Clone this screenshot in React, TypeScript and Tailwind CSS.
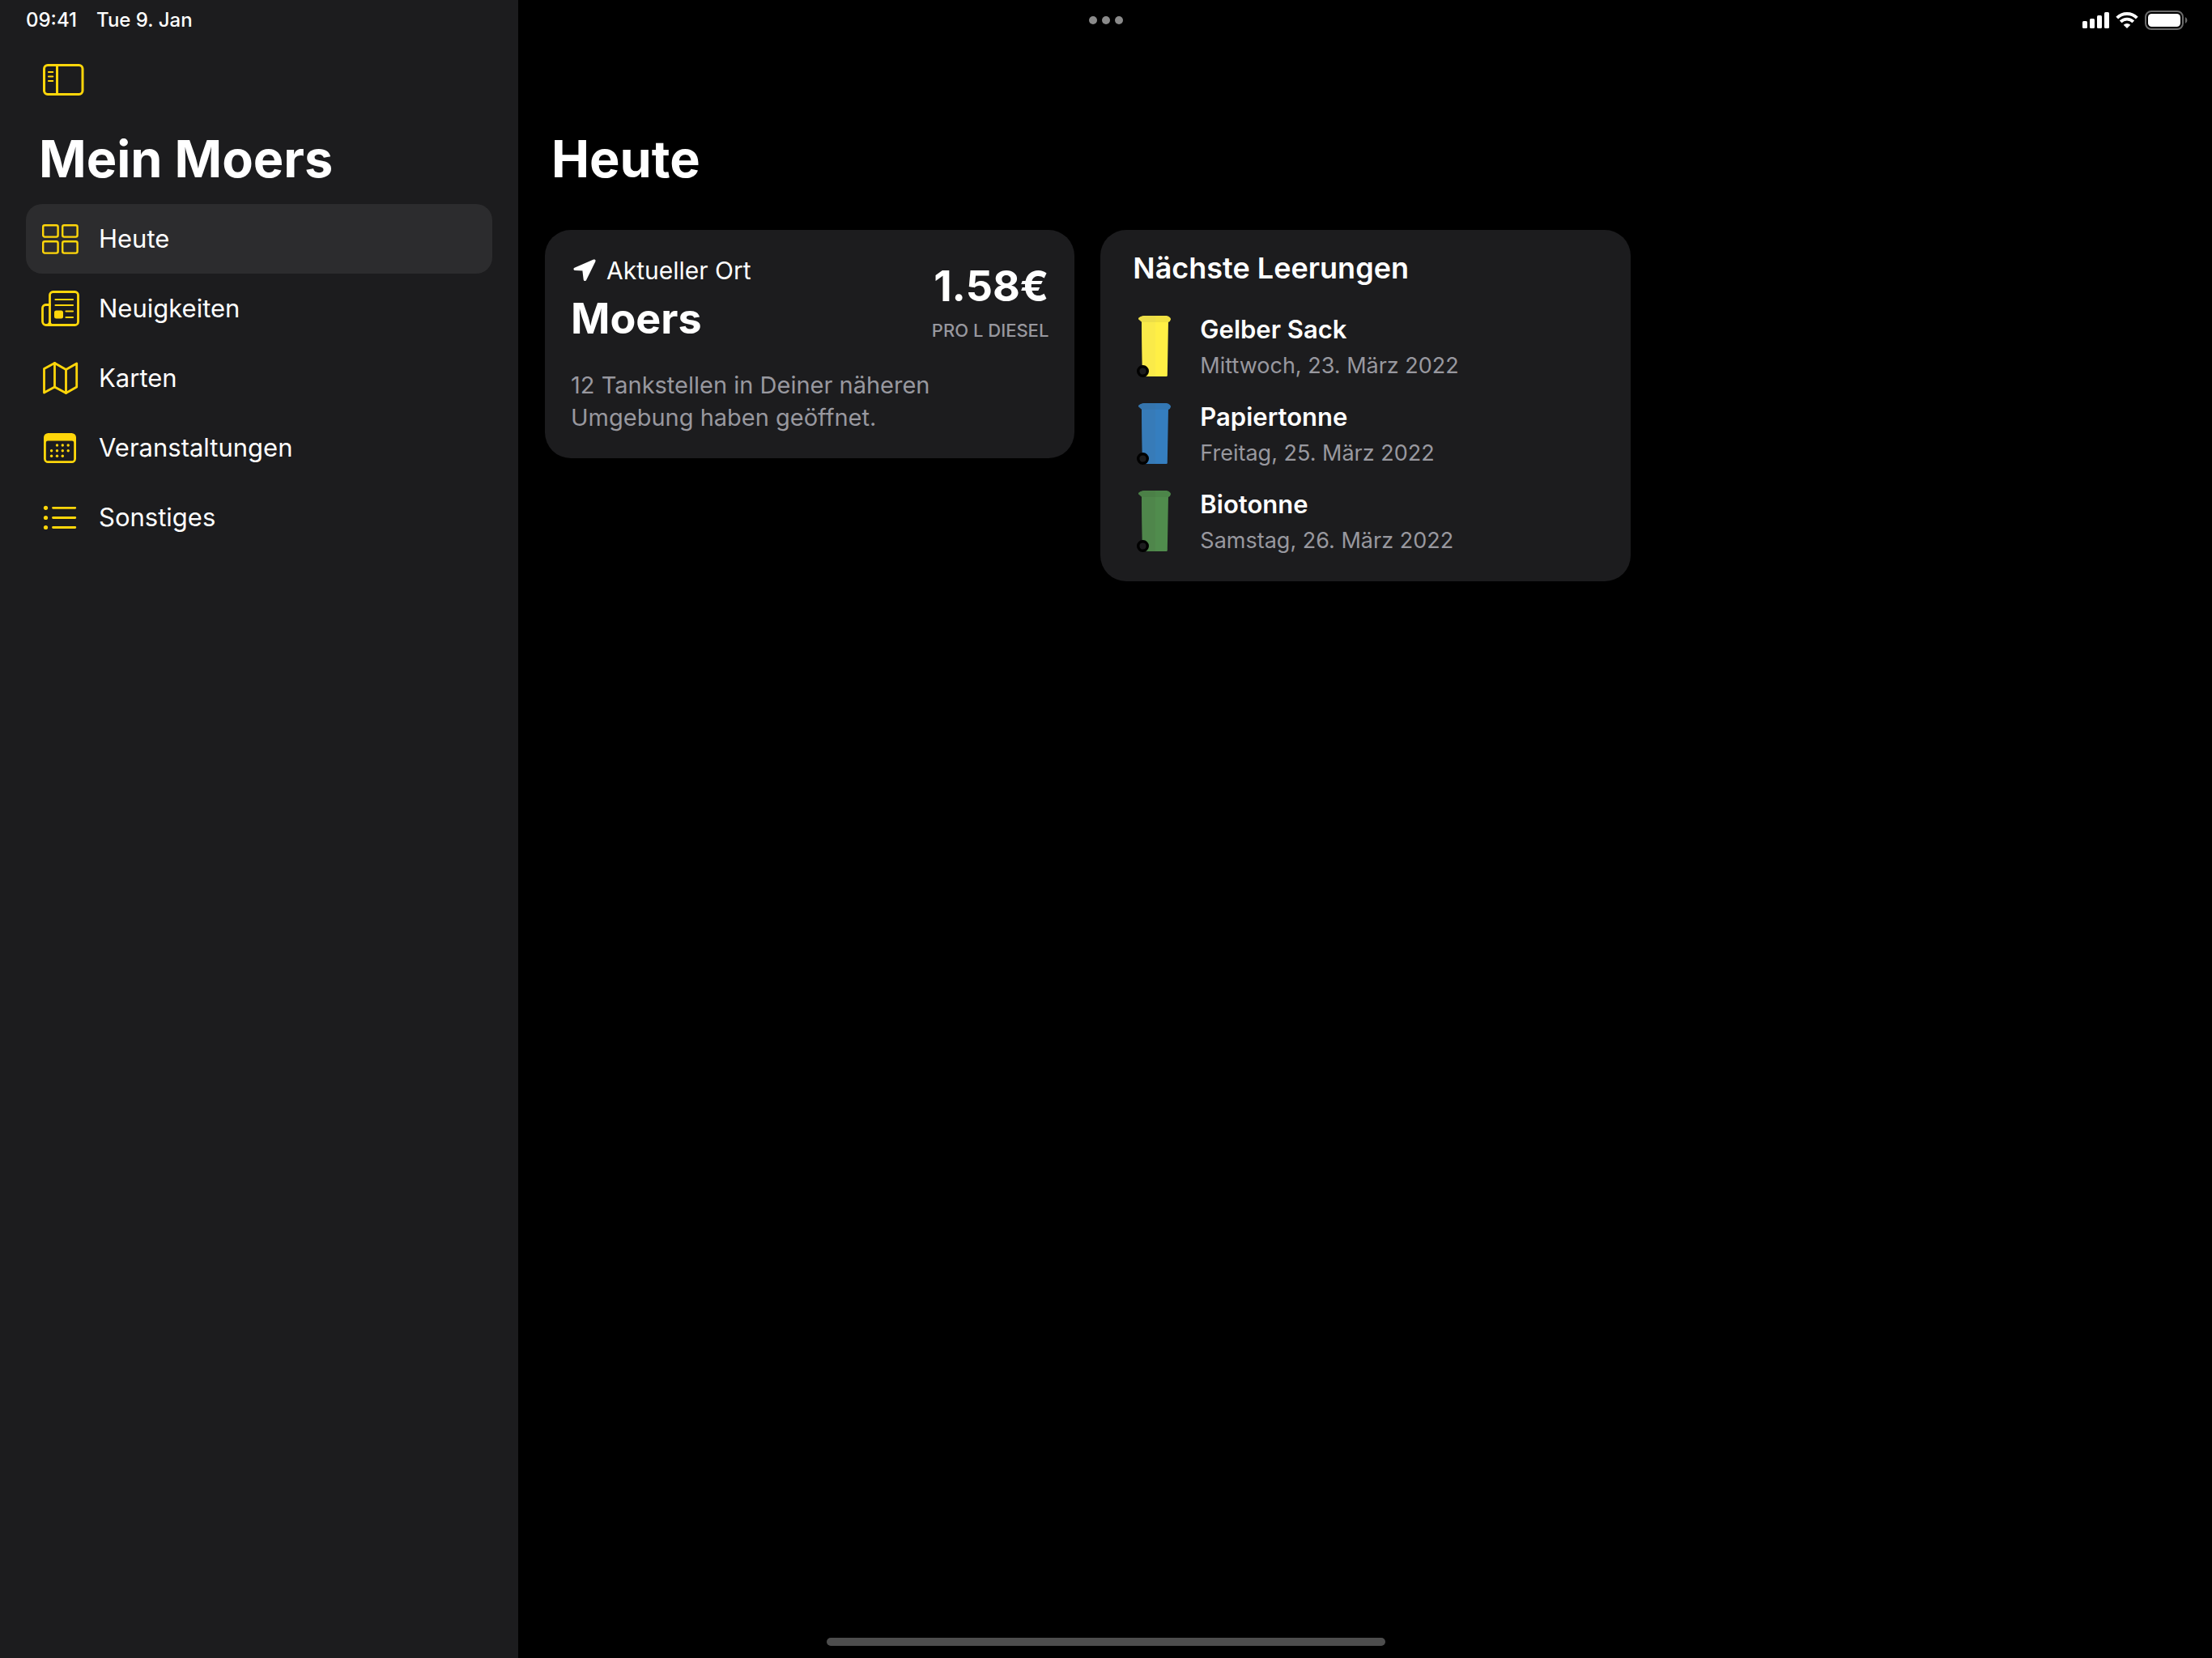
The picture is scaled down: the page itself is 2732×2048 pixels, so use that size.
import type { ReactNode } from "react";

const yellow = "#ffd60a";

function SidebarIcon() {
  return (
    <svg width="51" height="39" viewBox="0 0 51 39" fill="none" stroke={yellow} aria-hidden="true">
      <rect x="1.5" y="1.5" width="47.5" height="36" rx="4.5" strokeWidth="3" />
      <path d="M17.5 2v35" strokeWidth="3" />
      <path d="M7 10h5.200M7 15.500h5.200M7 21h5.200" strokeWidth="2.200" strokeLinecap="round" />
    </svg>
  );
}

function NavGlyph({ children }: { children: ReactNode }) {
  return (
    <svg
      width="48"
      height="48"
      viewBox="0 0 48 48"
      fill="none"
      stroke={yellow}
      strokeLinecap="round"
      strokeLinejoin="round"
      aria-hidden="true"
    >
      {children}
    </svg>
  );
}

function GridIcon() {
  return (
    <NavGlyph>
      <g strokeWidth="2.4">
        <rect x="3.200" y="7.200" width="18.400" height="14.400" rx="2" />
        <rect x="27.200" y="7.200" width="18.400" height="14.400" rx="2" />
        <rect x="3.200" y="27.200" width="18.400" height="14.400" rx="2" />
        <rect x="27.200" y="27.200" width="18.400" height="14.400" rx="2" />
      </g>
    </NavGlyph>
  );
}

function NewsIcon() {
  return (
    <NavGlyph>
      <rect x="11.5" y="3.5" width="35" height="41" rx="4" strokeWidth="2.8" />
      <path d="M11.500 19.500H6.500a4 4 0 0 0-4 4V40a4.500 4.500 0 0 0 9 0M7 44.500h9" strokeWidth="2.800" />
      <path d="M18.500 13h21.500M18.500 20h21.500M31.500 27.500h8.500M31.500 35h8.500" strokeWidth="2.200" />
      <rect x="17" y="26.500" width="11" height="10" rx="2.500" fill={yellow} stroke="none" />
    </NavGlyph>
  );
}

function MapIcon() {
  return (
    <NavGlyph>
      <path
        d="M4.500 12.500L17.500 5.500L31.500 13.500L44.700 6V35L31.500 42.500L17.500 35L4.500 42Z"
        strokeWidth="2.800"
      />
      <path d="M17.500 5.500V35M31.500 13.500V42.500" strokeWidth="2.800" />
    </NavGlyph>
  );
}

const calendarDots = [
  [20.5, 21],
  [27.3, 21],
  [34.2, 21],
  [13.6, 27.7],
  [20.5, 27.7],
  [27.3, 27.7],
  [34.2, 27.7],
  [13.6, 34.3],
  [20.5, 34.3],
  [27.3, 34.3],
];

function CalendarIcon() {
  return (
    <NavGlyph>
      <path
        fillRule="evenodd"
        stroke="none"
        fill={yellow}
        d="M9.500 6h29a5.500 5.500 0 0 1 5.500 5.500v26a5.500 5.500 0 0 1-5.500 5.500h-29a5.500 5.500 0 0 1-5.500-5.500v-26a5.500 5.500 0 0 1 5.500-5.500ZM9 15.500a2.200 2.200 0 0 0-2.200 2.200v20a2.600 2.600 0 0 0 2.600 2.600h29.200a2.600 2.600 0 0 0 2.600-2.600v-20a2.200 2.200 0 0 0-2.200-2.200Z"
      />
      {calendarDots.map(([x, y]) => (
        <circle key={`${x}-${y}`} cx={x} cy={y} r="1.700" fill={yellow} stroke="none" />
      ))}
    </NavGlyph>
  );
}

function ListIcon() {
  return (
    <NavGlyph>
      <path d="M15.500 12.300h27.300M15.500 24.500h27.300M15.500 36.500h27.300" strokeWidth="2.800" />
      <g fill={yellow} stroke="none">
        <circle cx="6.500" cy="12.300" r="2.600" />
        <circle cx="6.500" cy="24.500" r="2.600" />
        <circle cx="6.500" cy="36.500" r="2.600" />
      </g>
    </NavGlyph>
  );
}

function LocationIcon() {
  return (
    <svg width="30" height="30" viewBox="0 0 30 30" aria-hidden="true">
      <path
        d="M26.800 3.200L3.200 13.300L14 13.800L15.500 26.300Z"
        fill="#fff"
        stroke="#fff"
        strokeWidth="3.600"
        strokeLinejoin="round"
      />
    </svg>
  );
}

function StatusIcons() {
  return (
    <svg width="130" height="24" viewBox="0 0 130 24" fill="none" aria-hidden="true">
      <g fill="#fff">
        <rect x="0" y="13" width="6" height="9" rx="1.500" />
        <rect x="9" y="10" width="6" height="12" rx="1.500" />
        <rect x="18" y="6" width="6" height="16" rx="1.500" />
        <rect x="27" y="2" width="6" height="20" rx="1.500" />
        <path d="M55 22l-4.300-4.300a6 6 0 0 1 8.600 0Z" />
      </g>
      <path d="M42.700 9.100a17.500 17.500 0 0 1 24.600 0" stroke="#fff" strokeWidth="4" />
      <path d="M47.200 13.900a11 11 0 0 1 15.600 0" stroke="#fff" strokeWidth="3.800" />
      <rect x="78" y="1" width="46" height="22" rx="7" stroke="#6b6b6b" strokeWidth="2" />
      <rect x="81" y="4" width="40" height="16" rx="4.500" fill="#fff" />
      <path d="M127 8a4.500 4.500 0 0 1 0 8Z" fill="#6b6b6b" />
    </svg>
  );
}

type BinColors = { body: string; shade: string; lid: string; lidShade: string };

function BinIcon({ body, shade, lid, lidShade }: BinColors) {
  return (
    <svg width="42" height="76" viewBox="0 0 42 76" aria-hidden="true">
      <path d="M6 6H39L37.800 74a1.200 1.200 0 0 1-1.200 1H8.200a1.200 1.200 0 0 1-1.200-1Z" fill={body} />
      <path d="M6 6H23V75H8.200a1.200 1.200 0 0 1-1.200-1Z" fill={shade} />
      <path d="M9 0H37q5 1.500 5 4.500q-.500 2.500-3 3.500H6.500L2 4q0-2.500 7-4Z" fill={lid} />
      <path d="M9 0H23V8H6.500L2 4q0-2.500 7-4Z" fill={lidShade} />
      <circle cx="7.500" cy="68.500" r="5.800" fill="#1c1c1e" stroke="#000" strokeWidth="3.400" />
    </svg>
  );
}

const navItems = [
  { label: "Heute", icon: <GridIcon />, active: true },
  { label: "Neuigkeiten", icon: <NewsIcon />, active: false },
  { label: "Karten", icon: <MapIcon />, active: false },
  { label: "Veranstaltungen", icon: <CalendarIcon />, active: false },
  { label: "Sonstiges", icon: <ListIcon />, active: false },
];

const pickups = [
  {
    name: "Gelber Sack",
    date: "Mittwoch, 23. März 2022",
    colors: { body: "#ffef45", shade: "#faea49", lid: "#f1e142", lidShade: "#ecdd48" },
  },
  {
    name: "Papiertonne",
    date: "Freitag, 25. März 2022",
    colors: { body: "#357ebf", shade: "#377bb8", lid: "#3377b4", lidShade: "#3575ae" },
  },
  {
    name: "Biotonne",
    date: "Samstag, 26. März 2022",
    colors: { body: "#508c4d", shade: "#4f864b", lid: "#4c8549", lidShade: "#4b8047" },
  },
];

function StatusBar() {
  return (
    <header className="absolute inset-x-0 top-0 grid h-[50px] grid-cols-[1fr_auto_1fr] items-center px-[30px] text-2xl font-medium">
      <div className="flex gap-6 pl-0.5">
        <span>09:41</span>
        <span>Tue 9. Jan</span>
      </div>
      <button type="button" aria-label="Multitasking" className="flex gap-1.5">
        <span className="size-2.5 rounded-full bg-[#8a8a8a]" />
        <span className="size-2.5 rounded-full bg-[#8a8a8a]" />
        <span className="size-2.5 rounded-full bg-[#8a8a8a]" />
      </button>
      <div className="flex justify-end">
        <StatusIcons />
      </div>
    </header>
  );
}

function Sidebar() {
  return (
    <aside className="w-[641px] shrink-0 border-r border-black bg-[#1c1c1e] px-8 pt-[79px]">
      <button type="button" aria-label="Seitenleiste ausblenden" className="ml-[21px] block">
        <SidebarIcon />
      </button>
      <h1 className="mt-9 ml-4 text-[63px] leading-[84px] font-bold">Mein Moers</h1>
      <nav className="mt-3.5">
        <ul>
          {navItems.map((item) => (
            <li key={item.label}>
              <a
                href="#"
                aria-current={item.active ? "page" : undefined}
                className={
                  item.active
                    ? "flex h-[86px] items-center gap-6 rounded-[20px] bg-[#2c2c2e] pl-[18px] text-[31px]"
                    : "flex h-[86px] items-center gap-6 rounded-[20px] pl-[18px] text-[31px]"
                }
              >
                {item.icon}
                <span>{item.label}</span>
              </a>
            </li>
          ))}
        </ul>
      </nav>
    </aside>
  );
}

function FuelCard() {
  return (
    <section className="rounded-[32px] bg-[#1c1c1e] px-8 pt-8 pb-[30px]">
      <div className="flex justify-between">
        <div>
          <p className="flex items-center gap-3 pl-0.5 text-[30px] leading-9">
            <LocationIcon />
            Aktueller Ort
          </p>
          <h2 className="mt-2.5 text-[52px] leading-[64px] font-bold">Moers</h2>
        </div>
        <div className="pt-1.5 text-right">
          <p className="text-[52px] leading-[64px] font-bold">1.58€</p>
          <p className="mt-2 text-[22px] leading-7 font-medium text-[#98989f]">PRO L DIESEL</p>
        </div>
      </div>
      <p className="mt-[30px] max-w-[480px] text-[29px] leading-10 text-[#98989f]">
        12 Tankstellen in Deiner näheren Umgebung haben geöffnet.
      </p>
    </section>
  );
}

function PickupCard() {
  return (
    <section className="rounded-[32px] bg-[#1c1c1e] px-10 pt-6 pb-[30px]">
      <h2 className="text-[36px] leading-[46px] font-semibold">Nächste Leerungen</h2>
      <ul className="mt-[30px] flex flex-col gap-5">
        {pickups.map((pickup) => (
          <li key={pickup.name} className="flex h-[88px] items-center gap-9 pl-[5px]">
            <BinIcon {...pickup.colors} />
            <div className="pt-1">
              <h3 className="text-[31px] leading-[38px] font-semibold">{pickup.name}</h3>
              <p className="mt-1.5 text-[27px] leading-10 text-[#98989f]">{pickup.date}</p>
            </div>
          </li>
        ))}
      </ul>
    </section>
  );
}

export default function App() {
  return (
    <div className="relative flex min-h-screen bg-black font-['Inter',sans-serif] text-white">
      <Sidebar />
      <main className="min-w-0 flex-1 px-8 pt-[154px]">
        <h1 className="ml-2 text-[63px] leading-[84px] font-bold">Heute</h1>
        <div className="mt-[46px] grid grid-cols-3 items-start gap-8">
          <FuelCard />
          <PickupCard />
        </div>
      </main>
      <StatusBar />
      <div className="absolute bottom-[15px] left-1/2 h-2.5 w-[690px] -translate-x-1/2 rounded-full bg-[#4d4d4d]" />
    </div>
  );
}
